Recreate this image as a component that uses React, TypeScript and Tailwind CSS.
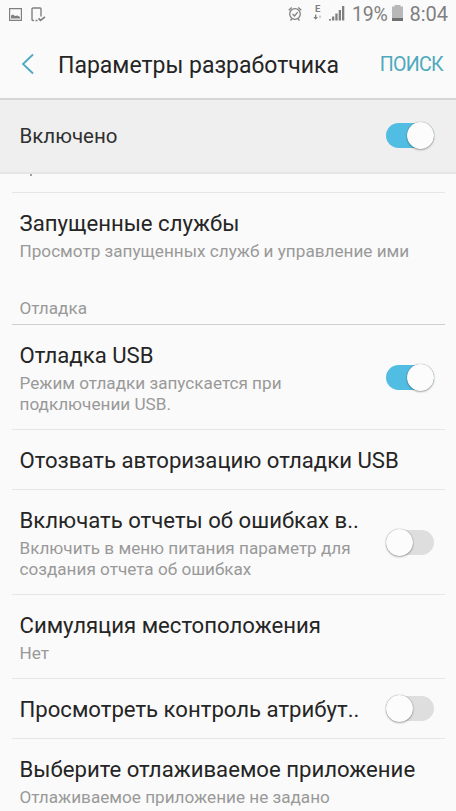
import clsx from "clsx";

function Switch({ on }: { on: boolean }) {
  return (
    <div
      role="switch"
      aria-checked={on}
      className={clsx(
        "flex h-[25px] w-12 shrink-0 items-center rounded-full",
        on ? "justify-end bg-[#52bde2]" : "justify-start bg-[#dedede]"
      )}
    >
      <div className="size-[27px] shrink-0 rounded-full bg-[#fcfcfc] shadow-[0_1px_2px_rgba(0,0,0,0.3),0_0_1px_rgba(0,0,0,0.45)]" />
    </div>
  );
}

type Item = {
  title: string;
  lines?: string[];
  on?: boolean;
  height: string;
};

const debugItems: Item[] = [
  {
    title: "Отладка USB",
    lines: ["Режим отладки запускается при", "подключении USB."],
    on: true,
    height: "h-[105px]",
  },
  { title: "Отозвать авторизацию отладки USB", height: "h-[60px]" },
  {
    title: "Включать отчеты об ошибках в..",
    lines: ["Включить в меню питания параметр для", "создания отчета об ошибках"],
    on: false,
    height: "h-[105px]",
  },
  { title: "Симуляция местоположения", lines: ["Нет"], height: "h-[84px]" },
  { title: "Просмотреть контроль атрибут..", on: false, height: "h-[60px]" },
  {
    title: "Выберите отлаживаемое приложение",
    lines: ["Отлаживаемое приложение не задано"],
    height: "h-[84px]",
  },
];

function RowText({ title, lines }: { title: string; lines?: string[] }) {
  return (
    <div className="self-start pt-4 whitespace-nowrap">
      <div className="text-[22.15px] leading-7 text-[#252525]">{title}</div>
      {lines && (
        <div className="mt-1 text-[17.15px] leading-[20.5px] text-[#999]">
          {lines.map((line) => (
            <div key={line}>{line}</div>
          ))}
        </div>
      )}
    </div>
  );
}

function Row({ item }: { item: Item }) {
  return (
    <div
      className={clsx(
        "flex shrink-0 items-center justify-between border-b border-[#e6e6e6] pr-[11px] pl-[7.5px]",
        item.height
      )}
    >
      <RowText title={item.title} lines={item.lines} />
      {item.on !== undefined && <Switch on={item.on} />}
    </div>
  );
}

function StatusBar() {
  return (
    <div className="flex h-7 shrink-0 items-center justify-between pr-2 pl-[9px] text-[#808080]">
      <div className="flex items-center gap-[9px]">
        <svg width="13" height="13" viewBox="0 0 13 13" fill="none" stroke="currentColor">
          <path d="M.6.6h11.8v11.8H.6z" strokeWidth="1.2" />
          <path d="M2 10.5V7.5l2-1 2 1.5 2.5-.5 2.5 1.5v1.5z" fill="currentColor" stroke="none" />
        </svg>
        <svg width="15" height="15" viewBox="0 0 15 15" fill="none" stroke="currentColor">
          <path d="M3 13.5H2a1 1 0 0 1-1-1V2a1 1 0 0 1 1-1h7a1 1 0 0 1 1 1v7.5M4.5 13.5h2" strokeWidth="1.4" />
          <path d="M7.5 11.3l2 2 4.5-3.5" strokeWidth="1.7" />
        </svg>
      </div>
      <div className="flex items-center">
        <svg width="14" height="16" viewBox="0 0 14 16" fill="none" stroke="currentColor" strokeWidth="1.3">
          <circle cx="7" cy="8" r="5.3" />
          <path d="M4.5 8l2 2 3.2-3.8M.7 4.2l3-2.7M13.3 4.2l-3-2.7M2.5 14.5l1.3-1.6M11.5 14.5l-1.3-1.6" />
        </svg>
        <div className="mb-1 ml-[11px] flex w-[9px] flex-col items-center">
          <span className="text-[9.5px] leading-[9px] font-bold">E</span>
          <svg className="mt-px" width="9" height="6" viewBox="0 0 9 6" fill="currentColor">
            <path d="M2 .5h1.3V3H5L2.7 5.8.3 3H2z" />
            <path d="M6.5 4.5h1V3h.8L7 1 5.7 3h.8z" opacity=".45" />
          </svg>
        </div>
        <svg className="mb-[2px] ml-[7px]" width="17" height="16" viewBox="0 0 17 16" fill="currentColor">
          <path d="M0 14h2v1.5H0zM3 11.5h2.3v4H3zM6.3 8.5h2.3v7H6.3zM9.7 5h2.3v10.5H9.7zM13 1h2.3v14.5H13z" />
        </svg>
        <span className="ml-[6px] pt-px text-[19.5px] leading-7 tracking-[-0.3px]">19%</span>
        <svg className="mb-[2px] ml-[5px]" width="11" height="16" viewBox="0 0 11 16">
          <path d="M2.5 0h6v1.5H11V16H0V1.5h2.5z" fill="#b8b8b8" />
          <path d="M0 13h11v3H0z" fill="#707070" />
        </svg>
        <span className="ml-[6px] text-[20px] leading-7">8:04</span>
      </div>
    </div>
  );
}

export default function App() {
  return (
    <div className="flex h-[811px] w-[456px] flex-col overflow-hidden bg-[#fafafa] font-[Roboto,sans-serif]">
      <StatusBar />
      <header className="flex h-[72px] shrink-0 items-center border-b-2 border-[#d6d6d6] pt-[2px] pr-[13px] pl-[21px]">
        <svg width="13" height="22" viewBox="0 0 13 22" fill="none" stroke="#4fa9bd" strokeWidth="1.8">
          <path d="M12 1.5L2 11l10 9.5" />
        </svg>
        <h1 className="ml-6 pt-[3px] text-[23px] leading-7 whitespace-nowrap text-[#252525]">
          Параметры разработчика
        </h1>
        <span className="ml-auto pt-[2px] text-[19.6px] leading-7 tracking-[-0.7px] text-[#4fa9bd]">
          ПОИСК
        </span>
      </header>
      <div className="flex h-[74px] shrink-0 items-center justify-between border-b-2 border-[#e5e5e5] bg-[#efefef] pr-[22px] pb-px pl-[19.5px]">
        <span className="text-[20.5px] leading-7 text-[#303030]">Включено</span>
        <Switch on />
      </div>
      <main className="flex min-h-0 flex-1 flex-col overflow-hidden pr-[11px] pl-3">
        {/* tail of the row scrolled under the header */}
        <div className="h-[19px] shrink-0 overflow-hidden border-b border-[#e6e6e6] pl-[18px]">
          <div className="h-[2px] w-[2px] bg-[#a0a0a0]" />
        </div>
        <div className="h-[94px] shrink-0 pl-[7.5px]">
          <RowText
            title="Запущенные службы"
            lines={["Просмотр запущенных служб и управление ими"]}
          />
        </div>
        <h2 className="h-[38px] shrink-0 border-b border-[#cfcfcf] pt-[11px] pl-[7.5px] text-[17.15px] leading-5 text-[#999]">
          Отладка
        </h2>
        {debugItems.map((item) => (
          <Row key={item.title} item={item} />
        ))}
      </main>
    </div>
  );
}
